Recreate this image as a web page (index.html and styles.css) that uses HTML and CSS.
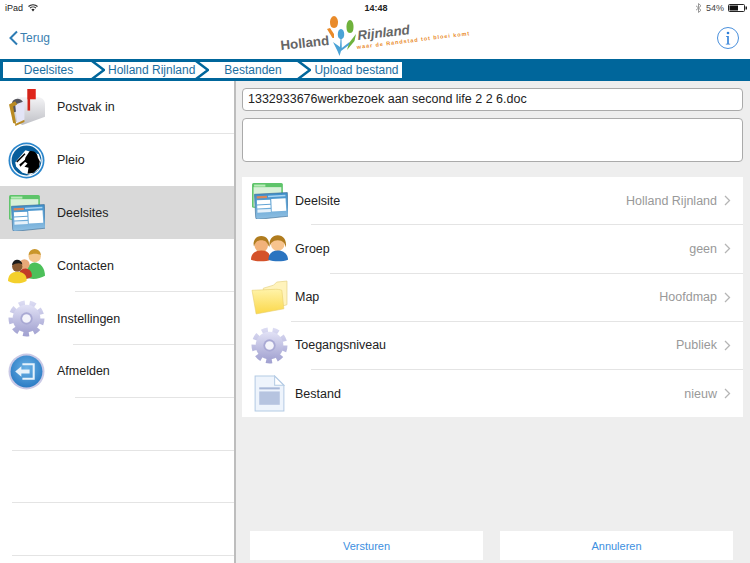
FILE: index.html
```html
<!DOCTYPE html>
<html lang="en">

<head>
  <meta charset="UTF-8" />
  <meta name="viewport" content="width=device-width, initial-scale=1" />
  <title>Upload bestand</title>
  <link rel="stylesheet" href="styles.css">
</head>

<body>
  <!-- shared icons -->
  <svg class="defs" width="0" height="0">
    <defs>
      <linearGradient id="gearFill" x1="0" y1="0" x2="0" y2="1">
        <stop offset="0" stop-color="#e2e2f6" />
        <stop offset="1" stop-color="#a5a5d2" />
      </linearGradient>
      <linearGradient id="gearTeeth" gradientUnits="userSpaceOnUse" x1="0" y1="0" x2="0" y2="36">
        <stop offset="0" stop-color="#dedef4" />
        <stop offset="1" stop-color="#a0a0d0" />
      </linearGradient>
      <linearGradient id="winFill" x1="0" y1="0" x2="0" y2="1">
        <stop offset="0" stop-color="#3f8fca" />
        <stop offset="1" stop-color="#8fbfe2" />
      </linearGradient>
      <radialGradient id="exitFill" cx="0.5" cy="0.4" r="0.6">
        <stop offset="0" stop-color="#6bb2e6" />
        <stop offset="1" stop-color="#2b7cc4" />
      </radialGradient>
      <linearGradient id="folderFill" x1="0" y1="0" x2="0" y2="1">
        <stop offset="0" stop-color="#fff3a8" />
        <stop offset="1" stop-color="#fbd84a" />
      </linearGradient>
      <linearGradient id="boxFill" x1="0" y1="0" x2="0" y2="1">
        <stop offset="0" stop-color="#f4f4f6" />
        <stop offset="1" stop-color="#bfc0c6" />
      </linearGradient>
      <symbol id="icoSites" viewBox="0 -1 36 36">
        <rect x="1" y="0" width="30" height="24" rx="1.500" fill="#5ec46a" />
        <rect x="2.500" y="4" width="27" height="19" fill="#d8f0d8" />
        <rect x="3" y="1.500" width="11" height="2" fill="#b9ecb9" />
        <g transform="rotate(-3 22 22)">
          <path d="M4 10h32v23l-30 1.500a2 2 0 0 1-2-2z" fill="url(#winFill)" stroke="#3c6c96" stroke-width=".6" />
          <rect x="6" y="12" width="10" height="2.200" fill="#d8865a" />
          <rect x="17" y="12" width="17" height="1.600" fill="#a9d4f2" />
          <rect x="6" y="16" width="13" height="4" fill="#fff" />
          <rect x="6" y="21" width="13" height="3" fill="#fff" />
          <rect x="6" y="25" width="13" height="3" fill="#e6f1fa" />
          <rect x="20" y="15.500" width="14" height="12" fill="#fff" />
        </g>
      </symbol>
      <symbol id="icoGear" viewBox="0 0 36 36">
        <circle cx="18" cy="18" r="15" fill="none" stroke="url(#gearTeeth)" stroke-width="5" stroke-dasharray="5.800 4.670" />
        <circle cx="18" cy="18" r="13.500" fill="url(#gearFill)" />
        <circle cx="18" cy="18" r="6" fill="#a9a9d4" />
        <circle cx="18" cy="18" r="4.200" fill="#f4f4fb" />
      </symbol>
    </defs>
  </svg>

  <div class="status">
    <div class="status-left">
      <span>iPad</span>
      <svg width="10" height="8" viewBox="0 0 10 8">
        <path d="M.5 2.500a6.500 6.500 0 0 1 9 0M2 4.200a4.300 4.300 0 0 1 6 0" fill="none" stroke="#222" stroke-width="1.100" />
        <path d="M3.400 5.600a2.200 2.200 0 0 1 3.200 0L5 7.500z" fill="#222" />
      </svg>
    </div>
    <div class="status-time">14:48</div>
    <div class="status-right">
      <svg width="7" height="10" viewBox="0 0 7 10">
        <path d="M1 2.800l5 4.400-2.500 2.300V.5L6 2.800 1 7.200" fill="none" stroke="#999" stroke-width="1" />
      </svg>
      <span>54%</span>
      <svg width="19" height="8" viewBox="0 0 19 8">
        <rect x=".5" y=".5" width="16" height="7" rx="1" fill="#fff" stroke="#222" />
        <rect x="1.500" y="1.500" width="8.500" height="5" fill="#111" />
        <rect x="17.500" y="2.500" width="1.500" height="3" fill="#222" />
      </svg>
    </div>
  </div>

  <div class="navbar">
    <a class="back">
      <svg width="11" height="16" viewBox="0 0 11 16">
        <path d="M9 1.500L2.500 8 9 14.500" fill="none" stroke="#2d7cb4" stroke-width="2" />
      </svg>
      <span>Terug</span>
    </a>
    <svg class="logo" width="192" height="44" viewBox="280 14 192 44">
      <path d="M335 28c-3 0-4-3-4-6s2-6 4-6 4 3 4 6-1 6-4 6z" fill="#e98b2a" />
      <path d="M328 29l3-1 4 6v4l-1.500 0z" fill="#e98b2a" />
      <path d="M351 33c-3 0-3.500-3-3.500-6.500s1.500-6.500 3.500-6.500 3.500 3 3.500 6.500-.5 6.500-3.500 6.500z" fill="#6fb23c" />
      <path d="M342 39c-2.500 0-3.200-2.500-3.200-5s1.200-5 3.200-5 3.200 2.500 3.200 5-.7 5-3.200 5z" fill="#4ba3d6" />
      <path d="M357 34l-1.500 7-7.500 9 2-7z" fill="#6fb23c" />
      <path d="M334 42l7 5 .5-8 1 0 .3 9 7.700-6-.5 3-8 6-1.500 5-2-5z" fill="#4ba3d6" />
      <text class="logo-word logo-plain" x="282" y="50" transform="rotate(-6 282 50)">Holland</text>
      <text class="logo-word" x="359" y="40" transform="rotate(-6.500 359 40)">Rijnland</text>
      <text class="logo-tag" x="358" y="49" transform="rotate(-7 358 49)">waar de Randstad tot bloei komt</text>
    </svg>
    <svg class="info" width="24" height="24" viewBox="0 0 24 24">
      <circle cx="12" cy="12" r="10.500" fill="none" stroke="#4a90dc" stroke-width="1" />
      <circle cx="12" cy="7" r="1.300" fill="#2f7fd8" />
      <path d="M10 10h2.800v7.800h1.400v.7H9.800v-.7h1.400V10.700H10z" fill="#2f7fd8" />
    </svg>
  </div>

  <div class="crumbbar">
    <div class="crumbs">
      <span class="crumb crumb-a">Deelsites</span>
      <svg class="chev" width="14" height="16" viewBox="0 0 14 16"><path d="M1 -1L13 8 1 17" /></svg>
      <span class="crumb crumb-b">Holland Rijnland</span>
      <svg class="chev" width="14" height="16" viewBox="0 0 14 16"><path d="M1 -1L13 8 1 17" /></svg>
      <span class="crumb crumb-c">Bestanden</span>
      <svg class="chev" width="14" height="16" viewBox="0 0 14 16"><path d="M1 -1L13 8 1 17" /></svg>
      <span class="crumb crumb-d">Upload bestand</span>
    </div>
  </div>

  <div class="content">
    <div class="sidebar">
      <div class="side-row">
        <svg class="icon" viewBox="0 0 36 36">
          <path d="M9 8h20a6.500 6.500 0 0 1 7 6.500V27L14 35 4 30z" fill="url(#boxFill)" />
          <path d="M4 13c1-4 8-5 10-1l-1 8-8 3z" fill="#55555c" />
          <path d="M7 15l9-3v19l-7 3z" fill="#e3e4f6" />
          <path d="M1 15l6-3 2 3-4 2 3 17-3-1z" fill="#b98a22" />
          <path d="M7 34l9-4v2l-9 4z" fill="#b98a22" />
          <rect x="19" y="0" width="8" height="10" fill="#e0261c" />
          <rect x="19" y="0" width="2.500" height="21" fill="#d2241a" />
        </svg>
        <span>Postvak in</span>
      </div>
      <div class="sep sep-80"></div>
      <div class="side-row">
        <svg class="icon" viewBox="0 0 36 36">
          <circle cx="18" cy="18" r="17.500" fill="#2a86cc" />
          <circle cx="18" cy="18" r="15.800" fill="#fff" />
          <circle cx="18" cy="18" r="14.500" fill="#075e9c" />
          <path d="M7 20l10-12 13 4 2 6-3 9-7 5-8-2-6-6z" fill="#fff" />
          <path d="M17 15l4-6c5-1 8 3 8 6l2 4-1 6-5 5-6 1 1-6-4-1 3-3-3-2z" fill="#000" />
          <path d="M8 19l8-8 1 1-8 8zM11 22l6-5 1 1-6 6z" fill="#000" />
        </svg>
        <span>Pleio</span>
      </div>
      <div class="sep sep-active"></div>
      <div class="side-row side-active">
        <svg class="icon"><use href="#icoSites" /></svg>
        <span>Deelsites</span>
      </div>
      <div class="sep sep-active"></div>
      <div class="side-row">
        <svg class="icon" viewBox="0 0 36 36">
          <circle cx="26" cy="9" r="6" fill="#f4c78e" />
          <path d="M20 8a6 6 0 0 1 12 0c-3-2-8-2-12 0z" fill="#c9962c" />
          <path d="M18 30c-1-10 3-15 8-15s10 5 10 13c-5 3-12 4-18 2z" fill="#4cc05a" />
          <circle cx="16" cy="17" r="5" fill="#e8a878" />
          <path d="M10 30c0-6 3-9 7-9s7 4 6 8c-4 3-9 3-13 1z" fill="#c23c28" />
          <circle cx="9" cy="19" r="5" fill="#8a5a32" />
          <path d="M4 18a5 5 0 0 1 10-1c-3-2-7-1-10 1z" fill="#1c1c1c" />
          <path d="M0 33c0-6 4-9 9-9s10 3 9 9c-5 3-13 3-18 0z" fill="#f4d02c" />
        </svg>
        <span>Contacten</span>
      </div>
      <div class="sep sep-75"></div>
      <div class="side-row">
        <svg class="icon"><use href="#icoGear" /></svg>
        <span>Instellingen</span>
      </div>
      <div class="sep sep-73"></div>
      <div class="side-row">
        <svg class="icon" viewBox="0 0 36 36">
          <circle cx="18" cy="18" r="17.500" fill="#c9c9e6" />
          <circle cx="18" cy="18" r="15.500" fill="url(#exitFill)" />
          <path d="M14 10h12v16H14v-2h10V12H14z" fill="#e6f2fb" />
          <path d="M7 18l6-5v3h8v4h-8v3z" fill="#e6f2fb" />
        </svg>
        <span>Afmelden</span>
      </div>
      <div class="sep sep-75"></div>
      <div class="side-row"></div>
      <div class="sep sep-12"></div>
      <div class="side-row"></div>
      <div class="sep sep-12"></div>
      <div class="side-row"></div>
      <div class="sep sep-12"></div>
    </div>

    <div class="main">
      <div class="field">1332933676werkbezoek aan second life 2 2 6.doc</div>
      <div class="field field-big"></div>

      <div class="table">
        <div class="row">
          <svg class="icon"><use href="#icoSites" /></svg>
          <span class="label">Deelsite</span>
          <span class="value">Holland Rijnland</span>
          <svg class="arrow" width="7" height="11" viewBox="0 0 7 11"><path d="M1 1l4.500 4.500L1 10" /></svg>
        </div>
        <div class="sep sep-69"></div>
        <div class="row">
          <svg class="icon" viewBox="0 0 36 36">
            <circle cx="10" cy="15" r="6.500" fill="#f2b27a" />
            <path d="M3 16a7.500 7.500 0 1 1 14 0c-1-4-3-6-7-6s-6 2-7 6z" fill="#b07c1e" />
            <path d="M0 29c0-6 4-9 10-9s9 3 9 9c-4 2-14 2-19 0z" fill="#d4522a" />
            <circle cx="26" cy="14" r="6.500" fill="#f7c48e" />
            <path d="M18 17c-1-8 3-12 8-12s9 4 8 12c-1-4-3-7-8-7s-7 3-8 7z" fill="#b07c1e" />
            <path d="M17 29c0-6 4-9 9-9s10 3 10 9c-5 2-14 2-19 0z" fill="#2a74c0" />
          </svg>
          <span class="label">Groep</span>
          <span class="value">geen</span>
          <svg class="arrow" width="7" height="11" viewBox="0 0 7 11"><path d="M1 1l4.500 4.500L1 10" /></svg>
        </div>
        <div class="sep sep-88"></div>
        <div class="row">
          <svg class="icon" viewBox="0 0 36 36">
            <path d="M12 9l10-3 3-3 10-1v23L12 32z" fill="#fff3bc" stroke="#e6d488" stroke-width=".7" />
            <path d="M1 11l23-1c1 0 4 0 6 1l2 18L5 34z" fill="url(#folderFill)" stroke="#e8d070" stroke-width=".6" />
          </svg>
          <span class="label">Map</span>
          <span class="value">Hoofdmap</span>
          <svg class="arrow" width="7" height="11" viewBox="0 0 7 11"><path d="M1 1l4.500 4.500L1 10" /></svg>
        </div>
        <div class="sep sep-49"></div>
        <div class="row">
          <svg class="icon"><use href="#icoGear" /></svg>
          <span class="label">Toegangsniveau</span>
          <span class="value">Publiek</span>
          <svg class="arrow" width="7" height="11" viewBox="0 0 7 11"><path d="M1 1l4.500 4.500L1 10" /></svg>
        </div>
        <div class="sep sep-69"></div>
        <div class="row">
          <svg class="icon" viewBox="0 0 36 36">
            <path d="M4 1h19l9 9v25H4z" fill="#eef4fc" stroke="#b4cbe4" stroke-width="1" />
            <path d="M23 1v9h9z" fill="#fff" stroke="#b4cbe4" stroke-width="1" />
            <rect x="8" y="12" width="20" height="2" fill="#a8b8d8" />
            <rect x="8" y="16" width="20" height="13" fill="#b6c4e0" />
          </svg>
          <span class="label">Bestand</span>
          <span class="value">nieuw</span>
          <svg class="arrow" width="7" height="11" viewBox="0 0 7 11"><path d="M1 1l4.500 4.500L1 10" /></svg>
        </div>
      </div>

      <div class="buttons">
        <button class="btn">Versturen</button>
        <button class="btn">Annuleren</button>
      </div>
    </div>
  </div>
</body>

</html>
```
FILE: styles.css
```css
* {
  box-sizing: border-box;
}

html,
body {
  height: 100%;
}

body {
  margin: 0;
  font-family: "Liberation Sans", Arial, sans-serif;
  font-size: 12.5px;
  color: #222;
  background: #fff;
  display: flex;
  flex-direction: column;
  overflow: hidden;
}

.defs {
  position: absolute;
}

/* status bar */
.status {
  height: 16px;
  padding: 0 3px 0 5px;
  display: grid;
  grid-template-columns: 1fr auto 1fr;
  align-items: center;
  font-size: 9px;
}

.status-left {
  display: flex;
  align-items: center;
  gap: 5px;
}

.status-time {
  font-weight: bold;
}

.status-right {
  display: flex;
  justify-content: flex-end;
  align-items: center;
  gap: 4px;
  color: #444;
}

/* nav */
.navbar {
  height: 43px;
  padding: 0 10px 0 8px;
  display: grid;
  grid-template-columns: 1fr auto 1fr;
  align-items: center;
}

.back {
  display: flex;
  align-items: center;
  gap: 1px;
  color: #3b7fb0;
  font-size: 12px;
}

.logo {
  margin-top: -4px;
  margin-left: 2px;
  overflow: visible;
}

.logo-word {
  font-size: 13.300px;
  font-weight: bold;
  font-style: italic;
  fill: #666;
}

.logo-plain {
  font-style: normal;
}

.logo-tag {
  font-size: 5.500px;
  font-weight: bold;
  letter-spacing: 0.950px;
  fill: #e98b2a;
}

.info {
  justify-self: end;
}

/* breadcrumb */
.crumbbar {
  height: 22px;
  padding: 3px 0 3px 3px;
  background: #00669b;
}

.crumbs {
  width: 399px;
  height: 16px;
  background: #fff;
  display: flex;
  color: #1b6e9f;
  font-size: 12px;
  line-height: 16px;
  white-space: nowrap;
}

.crumb {
  text-align: center;
}

.crumb-a {
  width: 88px;
  padding-left: 3px;
}

.crumb-b {
  width: 90px;
  padding-left: 3px;
}

.crumb-c {
  width: 88px;
}

.crumb-d {
  width: 91px;
}

.chev {
  flex: none;
}

.chev path {
  fill: none;
  stroke: #00669b;
  stroke-width: 2.500;
}

/* body columns */
.content {
  flex: 1;
  min-height: 0;
  display: flex;
}

.sidebar {
  width: 236px;
  flex: none;
  border-right: 2px solid #bdbdbd;
  overflow: hidden;
}

.side-row {
  height: 51.800px;
  padding-left: 8px;
  padding-top: 1px;
  display: flex;
  align-items: center;
  gap: 12px;
}

.side-active {
  background: #d9d9d9;
}

.icon {
  width: 37px;
  height: 37px;
  flex: none;
}

.sep {
  height: 1px;
  background: #e4e4e4;
}

.sep-active {
  background: #d9d9d9;
}

.sep-80 {
  margin-left: 80px;
}

.sep-75 {
  margin-left: 75px;
}

.sep-73 {
  margin-left: 73px;
}

.sep-12 {
  margin-left: 12px;
}

.sep-69 {
  margin-left: 69px;
}

.sep-88 {
  margin-left: 88px;
}

.sep-49 {
  margin-left: 49px;
}

.main {
  flex: 1;
  background: #eee;
  padding: 7px 7px 3px 6px;
  display: flex;
  flex-direction: column;
}

.field {
  height: 23px;
  padding: 0 5px;
  background: #fff;
  border: 1px solid #aaa;
  border-radius: 4px;
  line-height: 21px;
}

.field-big {
  height: 44px;
  margin-top: 7px;
}

.table {
  margin-top: 15px;
  background: #fff;
}

.row {
  height: 47.250px;
  padding: 0 12px 0 9px;
  display: flex;
  align-items: center;
}

.label {
  margin-left: 7px;
}

.value {
  margin-left: auto;
  color: #999;
}

.arrow {
  margin-left: 7px;
  flex: none;
}

.arrow path {
  fill: none;
  stroke: #b5b5b5;
  stroke-width: 1.300;
}

.buttons {
  margin-top: auto;
  padding: 0 10px 0 8px;
  display: flex;
  gap: 17px;
}

.btn {
  flex: 1;
  height: 29px;
  border: none;
  background: #fff;
  color: #3d8fe0;
  font-family: inherit;
  font-size: 11px;
}
```
